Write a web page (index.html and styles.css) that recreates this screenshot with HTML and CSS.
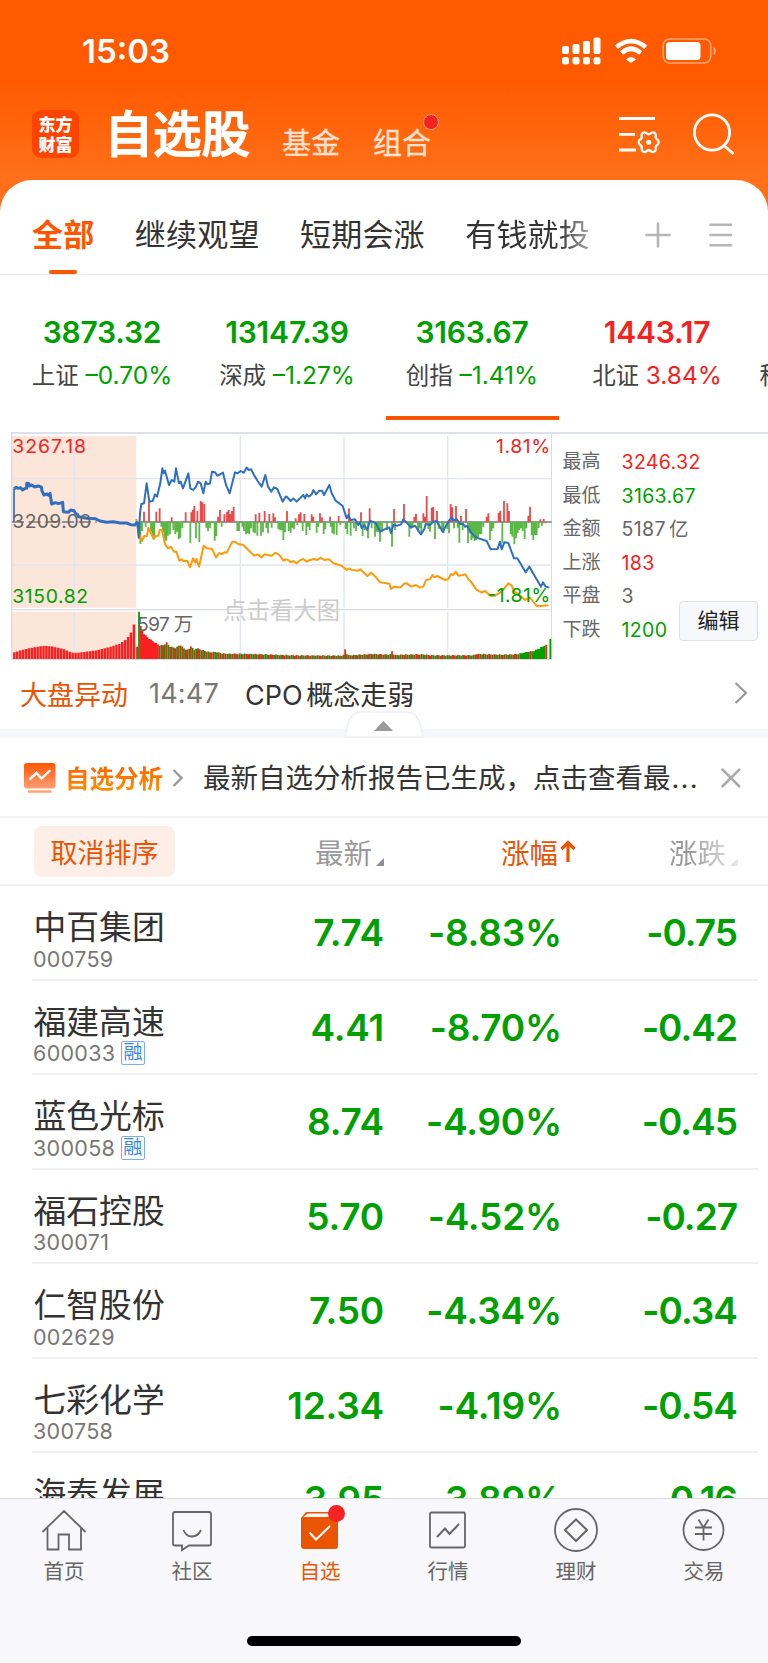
FILE: index.html
```html
<!DOCTYPE html>
<html lang="zh-CN">
<head>
  <meta charset="UTF-8" />
  <meta name="viewport" content="width=device-width, initial-scale=1.0" />
  <title>自选股</title>
  <link rel="stylesheet" href="styles.css">
</head>
<body>

<header>
  <div class="status-bar">
    <span class="time">15:03</span>
    <svg class="status-icons" width="156" height="30" viewBox="0 0 156 30">
      <g fill="#fff">
        <rect x="0" y="10" width="7" height="8" rx="2"/><rect x="10.500" y="8" width="7" height="10" rx="2"/>
        <rect x="21" y="5" width="7" height="13" rx="2"/><rect x="31.500" y="1.500" width="7" height="16.500" rx="2"/>
        <rect x="0" y="21" width="7" height="7.500" rx="2.500"/><rect x="10.500" y="21" width="7" height="7.500" rx="2.500"/>
        <rect x="21" y="21" width="7" height="7.500" rx="2.500"/><rect x="31.500" y="21" width="7" height="7.500" rx="2.500"/>
        <path d="M64 23.500 Q69 18.500 74 23.500 L69 27 Z"/>
        <rect x="104" y="6" width="34.500" height="18" rx="3.500"/>
      </g>
      <g fill="none" stroke="#fff" stroke-width="4.600">
        <path d="M54.500 11.200 Q69 -1 83.700 11.200"/>
        <path d="M59.500 17 Q69 8.500 78.700 17"/>
      </g>
      <rect x="101.200" y="3" width="47.500" height="24" rx="6.500" fill="none" stroke="#ffa673" stroke-width="1.600"/>
      <path d="M151.500 11 Q154 12 154 15 T151.500 19 Z" fill="#ffa673"/>
    </svg>
  </div>
  <div class="title-bar">
    <div class="logo"><span>东方</span><span>财富</span></div>
    <h1>自选股</h1>
    <a class="top-link">基金</a>
    <a class="top-link">组合<i class="dot"></i></a>
    <svg class="tool" width="44" height="44" viewBox="0 0 44 44" fill="none" stroke="#fff" stroke-width="2.800">
      <path d="M2 6.500H38M2 22.300H18M2 38H19"/>
      <path d="M26 20.800Q28.200 19.600 29.600 21.400Q31.700 23 33.800 21.400Q35.200 19.600 37.400 20.800Q39.200 22 38.600 24.400Q38.600 27 40.700 27.800Q42.600 30.200 40.700 32.600Q38.600 33.400 38.600 36Q39.200 38.400 37.400 39.600Q35.200 40.800 33.800 39Q31.700 37.400 29.600 39Q28.200 40.800 26 39.600Q24.200 38.400 24.800 36Q24.800 33.400 22.700 32.600Q20.800 30.200 22.700 27.800Q24.800 27 24.800 24.400Q24.200 22 26 20.800Z" stroke-width="2.300" stroke-linejoin="round"/>
      <circle cx="31.700" cy="30.200" r="2.500" fill="#fff" stroke="none"/>
    </svg>
    <svg class="search" width="44" height="44" viewBox="0 0 44 44" fill="none" stroke="#fff" stroke-width="2.800">
      <circle cx="20" cy="20.500" r="17.600"/><path d="M31.500 33L41.500 42"/>
    </svg>
  </div>
</header>

<main>
  <nav class="groups">
    <a class="active">全部</a>
    <a>继续观望</a>
    <a>短期会涨</a>
    <a class="fade">有钱就投</a>
    <svg class="plus" width="26" height="26" viewBox="0 0 26 26" stroke="#b5b5b5" stroke-width="2.600" stroke-linecap="round"><path d="M1.500 13H24.500M13 1.500V24.500"/></svg>
    <svg class="menu" width="24" height="26" viewBox="0 0 24 26" stroke="#b5b5b5" stroke-width="2.600" stroke-linecap="round"><path d="M1.500 2.800H22M1.500 13H22M1.500 23.200H22"/></svg>
  </nav>

  <section class="indexes">
    <div class="index down"><b>3873.32</b><p>上证 <em>–0.70%</em></p></div>
    <div class="index down"><b>13147.39</b><p>深成 <em>–1.27%</em></p></div>
    <div class="index down active"><b>3163.67</b><p>创指 <em>–1.41%</em></p></div>
    <div class="index up"><b>1443.17</b><p>北证 <em>3.84%</em></p></div>
    <div class="index up cut"><p>科创</p></div>
  </section>

  <section class="market">
    <svg class="chart" width="541" height="228" viewBox="33 21 1623 684">
      <path d="M36 33H409V548H36ZM36 560H409V702H36Z" fill="#fce5d9"/>
      <g stroke="#e2e5ef" stroke-width="4" fill="none">
        <path d="M223 33V548M223 560V702M721 33V548M721 560V702M1032 33V548M1032 560V702M1343 33V548M1343 560V702"/>
        <path d="M36 161H1655M36 420H1655"/>
      </g>
      <path d="M35 21V704H1655V21M35 554H1655" fill="none" stroke="#dadce5" stroke-width="4"/>
      <text class="watermark" x="670" y="582" textLength="350">点击看大图</text>
      <path d="M36 291H290" stroke="#777" stroke-width="4" stroke-dasharray="36 14"/>
      <path d="M420 291H1655" stroke="#777" stroke-width="4"/>
      <g id="momentum"></g>
      <g id="volume"></g>
      <g class="line avg">
        <polyline points="409,282 416,325 426,348 433,333 441,333 445,308 461,342 468,333 475,332 479,315 486,315 495,357 504,370 513,365 522,380 529,380 538,407 545,403 550,408 562,407 570,427 579,400 586,413 589,402 597,425 611,362 620,370 636,372 648,397 657,385 666,387 673,382 680,383 697,350 705,350 714,357 730,360 745,375 762,392 773,388 785,397 793,388 802,390 815,392 826,383 838,390 850,407 860,402"/>
        <polyline transform="translate(840)" points="20,402 32,412 40,408 50,415 58,407 70,402 80,410 90,405 103,402 112,405 121,398 132,405 148,403 160,415 185,422 200,435 207,430 215,435 235,437 241,433 252,443 262,453 273,443 288,457 300,472 328,476 333,492 342,485 352,487 362,487 372,476 380,475 394,485 408,480 420,488 430,485 438,465 450,463 457,450 463,457 471,453 495,465 505,462 513,447 520,450 527,440 535,452 550,450 556,448 565,463 573,470 588,493 605,503 615,498 632,513 645,512 665,500 685,475 695,482 703,500 712,505 735,525 750,518 770,543 783,543 805,541"/>
      </g>
      <g class="line price">
        <polyline stroke-width="5" points="42,290 42,192"/>
        <polyline class="thick" points="42,192 48,187 55,190 62,188 68,195 76,190 80,190 80,175 84,182 86,175 88,183 95,180 104,186 114,183 124,186 126,198 132,210 141,207 146,211 150,205 155,237 166,233 175,236 188,232 190,260 205,262 212,255 222,257 226,265 232,268 236,275 260,280 285,281 300,288 320,292 340,290 360,294 380,294 392,299 405,300 412,290"/>
        <polyline points="412,290 416,338 420,265 424,237 432,235 440,175 448,230 458,228 465,208 471,215 481,175 487,130 491,145 495,137 507,180 515,165 523,170 528,130 537,175 542,170 549,190 565,145 571,190 580,195 588,185 594,170 602,175 610,205 617,170 622,178 630,175 636,140 645,142 652,152 662,147 669,143 678,180 689,205 705,142 713,145 722,138 731,143 740,128 746,135 753,133 762,150 773,168 785,185 796,150 804,185 814,200 822,187 832,192 848,230 858,213"/>
        <polyline transform="translate(840)" points="18,213 32,228 40,220 50,230 70,210 75,220 80,208 86,215 95,208 100,195 108,208 118,197 126,197 132,210 148,180 155,205 167,227 188,243 200,280 205,270 212,285 225,283 235,300 240,292 245,310 253,300 262,315 270,287 288,295 300,320 313,313 328,307 333,325 340,300 352,302 363,298 370,283 380,293 393,308 405,302 423,328 433,312 437,297 450,300 460,290 470,288 488,320 505,290 515,277 522,287 530,282 540,297 550,297 555,305 562,303 567,313 578,328 590,338 620,348 632,373 653,372 660,350 665,373 673,352 685,354 702,400 712,400 737,442 748,425 783,485 789,472 796,484 808,488"/>
      </g>
      <g class="scale">
        <text x="37" y="84" textLength="221" fill="#f52222">3267.18</text>
        <text x="37" y="308" textLength="237" fill="#666">3209.00</text>
        <text x="37" y="533" textLength="227" fill="#00a000">3150.82</text>
        <text x="1488" y="84" textLength="163" fill="#f52222">1.81%</text>
        <text x="1462" y="532" textLength="189" fill="#00a000">-1.81%</text>
        <text x="411" y="618" textLength="168" fill="#666">597 万</text>
      </g>
    </svg>
    <dl class="stats">
      <div><dt>最高</dt><dd class="up">3246.32</dd></div>
      <div><dt>最低</dt><dd class="down">3163.67</dd></div>
      <div><dt>金额</dt><dd>5187 亿</dd></div>
      <div><dt>上涨</dt><dd class="up">183</dd></div>
      <div><dt>平盘</dt><dd>3</dd></div>
      <div><dt>下跌</dt><dd class="down">1200</dd></div>
    </dl>
    <button class="edit">编辑</button>
  </section>

  <section class="news">
    <span class="news-tag">大盘异动</span>
    <span class="news-time">14:47</span>
    <span class="news-text">CPO 概念走弱</span>
    <svg class="chevron" width="14" height="24" viewBox="0 0 14 24" fill="none" stroke="#999" stroke-width="2.200"><path d="M1.500 2L12 12L1.500 22"/></svg>
  </section>

  <div class="divider">
    <svg class="handle" width="78" height="28" viewBox="0 0 78 28">
      <path d="M1 26Q2 1 16 1H62Q76 1 77 26Z" fill="#fff" stroke="#eef0f3" stroke-width="1.500"/>
      <path d="M29 20L38.500 10L48 20Z" fill="#999"/>
    </svg>
  </div>

  <section class="report">
    <svg width="32" height="32" viewBox="0 0 32 32">
      <defs><linearGradient id="g" x1="0" y1="0" x2="0" y2="1"><stop offset="0" stop-color="#ff5500"/><stop offset="1" stop-color="#ff9f78"/></linearGradient></defs>
      <rect x="0" y="1" width="31.500" height="25.500" rx="3" fill="url(#g)"/>
      <path d="M5.500 17.500L12.500 11L17.500 16.500L26.500 8" fill="none" stroke="#fff" stroke-width="2.400"/>
      <path d="M4 29.500H27.500" stroke="#ffa27a" stroke-width="2.500"/>
    </svg>
    <strong>自选分析</strong>
    <svg class="report-arrow" width="12" height="20" viewBox="0 0 12 20" fill="none" stroke="#999" stroke-width="2.400"><path d="M1.500 2L9.500 10L1.500 18"/></svg>
    <span class="report-text">最新自选分析报告已生成，点击查看最<span class="more">...</span></span>
    <svg class="close" width="22" height="22" viewBox="0 0 22 22" stroke="#aaa" stroke-width="2.600"><path d="M1.800 1.800L20 20M20 1.800L1.800 20"/></svg>
  </section>

  <div class="list-head">
    <button class="reset">取消排序</button>
    <span class="col price-col">最新<svg width="8" height="8" viewBox="0 0 8 8"><path d="M8 0V8H0Z" fill="#8e8e96"/></svg></span>
    <span class="col rate-col">涨幅<svg width="16" height="22" viewBox="0 0 16 22" fill="none" stroke="#ea5504" stroke-width="3.200"><path d="M8 22V2.500M1.500 9L8 2.500L14.500 9"/></svg></span>
    <span class="col diff-col">涨跌<svg width="8" height="8" viewBox="0 0 8 8"><path d="M8 0V8H0Z" fill="#8e8e96"/></svg></span>
  </div>

  <div class="list">
    <div class="stock"><div class="name">中百集团<small>000759</small></div><b>7.74</b><b>-8.83%</b><b class="diff">-0.75</b></div>
    <div class="stock"><div class="name">福建高速<small>600033<i>融</i></small></div><b>4.41</b><b>-8.70%</b><b class="diff">-0.42</b></div>
    <div class="stock"><div class="name">蓝色光标<small>300058<i>融</i></small></div><b>8.74</b><b>-4.90%</b><b class="diff">-0.45</b></div>
    <div class="stock"><div class="name">福石控股<small>300071</small></div><b>5.70</b><b>-4.52%</b><b class="diff">-0.27</b></div>
    <div class="stock"><div class="name">仁智股份<small>002629</small></div><b>7.50</b><b>-4.34%</b><b class="diff">-0.34</b></div>
    <div class="stock"><div class="name">七彩化学<small>300758</small></div><b>12.34</b><b>-4.19%</b><b class="diff">-0.54</b></div>
    <div class="stock"><div class="name">海泰发展</div><b>3.95</b><b>-3.89%</b><b class="diff">-0.16</b></div>
  </div>
</main>

<footer>
  <div class="tabs">
    <a>
      <svg width="46" height="46" viewBox="0 0 46 46"><path d="M1.500 24L23 3L44.500 24M6.500 20V41.500H17.500V26.500H28V41.500H40V20"/></svg>
      首页
    </a>
    <a>
      <svg width="46" height="46" viewBox="0 0 46 46"><path d="M6 4H40Q42 4 42 6V35.500Q42 37.500 40 37.500H20L13 42V37.500H6Q4 37.500 4 35.500V6Q4 4 6 4Z"/><path d="M14.500 22Q17 28.500 23 28.500T32 22"/></svg>
      社区
    </a>
    <a class="active">
      <svg width="46" height="46" viewBox="0 0 46 46"><path d="M9 4H36L41 10V38Q41 41 38 41H7Q4 41 4 38V10Z" fill="#ea5504" stroke="none"/><path d="M6.500 9L10.500 5.500H34L38 9Z" fill="#f8f8fa" stroke="none"/><path d="M12.500 24.500L19 31.500L33 18" stroke="#fff" stroke-width="2"/></svg>
      自选<i class="dot"></i>
    </a>
    <a>
      <svg width="46" height="46" viewBox="0 0 46 46"><rect x="5" y="4.500" width="35" height="35" rx="1.500"/><path d="M12 29L20 20.500L24.500 26L34 16" stroke-width="2"/></svg>
      行情
    </a>
    <a>
      <svg width="46" height="46" viewBox="0 0 46 46"><circle cx="23" cy="22" r="21"/><path d="M23 11.500L34 22L23 33L12 22Z" stroke-width="2"/></svg>
      理财
    </a>
    <a>
      <svg width="46" height="46" viewBox="0 0 46 46"><circle cx="22.500" cy="22" r="20"/><path d="M17.500 11.500L22.500 19.500L27.500 11.500M14 19.500H31M14 26H31M22.500 19.500V32.500"/></svg>
      交易
    </a>
  </div>
  <div class="home-bar"></div>
</footer>

<script src="chart.js"></script>
</body>
</html>
```

FILE: styles.css
```css
* { box-sizing: border-box; }
body {
  margin: 0;
  height: 1663px;
  display: flex;
  flex-direction: column;
  overflow: hidden;
  font-family: Inter, 'Noto Sans CJK SC', sans-serif;
  font-weight: 400;
  color: #333;
  background: linear-gradient(#ff5a00 80px, #ff7019 180px, #ff7019);
}
h1, p, dl, dd { margin: 0; }
em, i { font-style: normal; }
button { font-family: inherit; padding: 0; border: 0; }
svg { display: block; flex: none; }
.up { color: #f52222; }
.down { color: #00a000; }

header { height: 180px; flex: none; color: #fff; }
.status-bar {
  height: 100px;
  padding: 2px 50px 0 82px;
  display: flex;
  align-items: center;
  justify-content: space-between;
}
.time { font-size: 33px; font-weight: 600; }
.title-bar { display: flex; height: 80px; padding: 10px 32px 0 32px; }
.logo {
  width: 47px;
  height: 48px;
  border-radius: 9px;
  background: #ff4400;
  display: flex;
  flex-direction: column;
  align-items: center;
  justify-content: center;
  font: 900 17px/20px 'Noto Sans CJK SC', sans-serif;
}
h1 { margin-left: 27px; font-size: 48.500px; line-height: 49px; font-weight: 500; width: 147px; text-indent: -1.500px; white-space: nowrap; -webkit-text-stroke: 1.400px #fff; }
.top-link { position: relative; font-size: 29px; line-height: 68px; height: 60px; margin-left: 29px; width: 62px; color: #ffe3d2; white-space: nowrap; -webkit-text-stroke: .3px #ffe3d2; }
.top-link .dot { position: absolute; left: 50px; top: 4px; border: 1px solid #ffa080; }
.dot { width: 16px; height: 16px; border-radius: 50%; background: #f52222; }
.tool { margin-left: auto; margin-top: 2px; }
.search { margin: 2px 0 0 31px; }

main {
  background: #fff;
  border-radius: 32px 32px 0 0;
  height: 1318px;
  flex: none;
  overflow: hidden;
}
.groups {
  height: 95px;
  padding: 0 35.500px 0 32px;
  display: flex;
  align-items: center;
  border-bottom: 1px solid #eaebed;
  font-size: 31px;
}
.groups a { position: relative; margin-right: 40.400px; padding-top: 15px; height: 94px; line-height: 80px; letter-spacing: .2px; white-space: nowrap; }
.groups .active { color: #ff5500; font-weight: 600; }
.groups .active::after {
  content: '';
  position: absolute;
  left: 17px;
  bottom: 0;
  width: 28px;
  height: 4px;
  border-radius: 2px;
  background: #ff5500;
}
.groups .fade { margin-right: 0; background: linear-gradient(90deg, #333 75%, #aaa); -webkit-background-clip: text; color: transparent; }
.plus { margin: 15px 0 0 auto; }
.menu { margin: 15px 0 0 38px; }

.indexes { display: flex; height: 157px; padding-left: 9.500px; overflow: hidden; }
.index {
  position: relative;
  flex: none;
  width: 185px;
  padding-top: 37.500px;
  text-align: center;
  white-space: nowrap;
}
.index b { display: block; font-size: 30px; line-height: 38px; font-weight: 600; letter-spacing: -0.2px; }
.index p { font-size: 23.500px; line-height: 49px; color: #444; }
.index em { font-size: 24.500px; }
.down em { color: #00a000; }
.up em { color: #f52222; }
.index.active::after {
  content: '';
  position: absolute;
  left: 6px;
  right: 6px;
  top: 141px;
  height: 4px;
  background: #ff5500;
}
.cut { text-align: left; padding: 76px 0 0 10px; }

.market { position: relative; display: flex; height: 230px; margin-left: 11px; border-top: 2px solid #dfe1ea; }
.chart { margin-top: -2px; }
.chart text { font-family: Inter, 'Noto Sans CJK SC', sans-serif; }
.scale text { font-size: 58px; }
.chart .watermark { font-size: 70px; fill: #ccc; }
.line { fill: none; stroke-width: 6; stroke-linejoin: round; }
.price { stroke: #2f6fc0; }
.price .thick { stroke-width: 9; }
.avg { stroke: #ff9a0a; }
.stats { padding: 11px 0 0 10.500px; font-size: 19px; color: #666; }
.stats div { display: flex; height: 33.500px; line-height: 34px; }
.stats dt { width: 59px; }
.stats dd { font-size: 19.500px; letter-spacing: .35px; word-spacing: -2.500px; }
.edit {
  position: absolute;
  right: 10px;
  top: 166.500px;
  width: 79px;
  height: 40px;
  border: 1px solid #dcdfe5;
  border-radius: 4px;
  background: #f7f8fa;
  color: #222;
  font-size: 21px;
  line-height: 36px;
}

.news { display: flex; align-items: center; height: 67px; padding: 0 20px 5px; font-size: 27px; white-space: nowrap; }
.news-tag { color: #ea5504; width: 129px; }
.news-time { color: #777; width: 96px; letter-spacing: .2px; }
.news-text { word-spacing: -4px; }
.chevron { margin-left: auto; }
.divider { position: relative; height: 9px; background: #f5f7fa; }
.handle { position: absolute; left: 345px; top: -18px; }

.report { display: flex; align-items: center; height: 80px; padding: 1px 26px 0 24px; border-bottom: 2px solid #f2f3f5; }
.report strong {
  margin-left: 9px;
  font-size: 24.500px;
  font-weight: 700;
  white-space: nowrap;
  background: linear-gradient(#ff5a00, #ff9500);
  -webkit-background-clip: text;
  color: transparent;
}
.report-arrow { margin-left: 9px; }
.report-text { margin-left: 19px; font-size: 27.500px; line-height: 36px; white-space: nowrap; }
.more { margin-left: 1px; letter-spacing: 1.200px; }
.close { margin-left: auto; }

.list-head { display: grid; grid-template-columns: 141px 209px 192px 1fr; padding: 0 30px 0 34px; height: 68px; align-items: center; border-bottom: 2px solid #f2f3f5; font-size: 28.500px; }
.reset { height: 51px; border-radius: 8px; background: #fdeee8; color: #ea5504; font-size: 27px; }
.col { display: flex; align-items: center; justify-content: flex-end; color: #999; height: 40px; white-space: nowrap; }
.col svg { margin: 22px 0 0 4px; }
.rate-col { color: #ea5504; }
.rate-col svg { margin: 0 0 0 2px; }
.diff-col { -webkit-mask-image: linear-gradient(90deg, #000 70%, rgba(0,0,0,.2) 100%); }

.stock {
  display: grid;
  grid-template-columns: 175px 177px 178px 176px;
  height: 94.500px;
  margin: 0 10px 0 32px;
  border-bottom: 2px solid #f0f0f1;
}
.name { padding: 20px 0 0 1.500px; font-size: 32.800px; line-height: 42px; white-space: nowrap; }
.name small { display: flex; align-items: center; height: 21px; margin-left: -0.5px; font-size: 21.500px; color: #777; letter-spacing: .3px; }
.name small i {
  width: 24px;
  height: 24px;
  margin-left: 5.500px;
  border: 1.500px solid #79aeea;
  border-radius: 2px;
  color: #3888e0;
  font-size: 19px;
  line-height: 21px;
  text-align: center;
  letter-spacing: 0;
}
.stock b { text-align: right; font-size: 37px; line-height: 94px; height: 90px; font-weight: 600; color: #00a000; letter-spacing: -0.2px; }
.stock .diff { letter-spacing: -1px; padding-right: 1px; }

footer { position: relative; flex: 1; background: #f8f8fa; border-top: 1px solid #dcdcdf; }
.tabs { display: flex; }
.tabs a {
  position: relative;
  flex: 1;
  display: flex;
  flex-direction: column;
  align-items: center;
  padding-top: 9px;
  font-size: 20.500px;
  line-height: 36px;
  color: #666;
}
.tabs svg { fill: none; stroke: #666; stroke-width: 1.800; }
.tabs .active { color: #ea5504; }
.tabs .dot { position: absolute; left: 72px; top: 6px; width: 17px; height: 17px; }
.home-bar { position: absolute; left: 247px; bottom: 17px; width: 274px; height: 10px; border-radius: 5px; background: #000; }
```

FILE: chart.js
```js
// [x, y] ends of the bars, measured from the zero line at y = 291
const ZERO = 291;
const rises = [
  432,260, 447,230, 469,260, 479,250, 515,277, 557,262, 574,262, 578,255, 583,243, 592,258, 602,228, 607,232, 613,237,
  654,275, 660,255, 673,268, 681,260, 686,255, 691,267, 696,258, 701,245, 767,268, 778,263, 794,258, 808,267, 820,265,
  825,277, 861,258, 887,280, 897,268, 902,262, 913,267, 935,268, 940,275, 960,265, 966,277, 990,275, 1016,273,
  1047,250, 1083,262, 1109,250, 1182,252, 1212,237, 1243,275, 1248,266, 1270,265, 1275,275, 1280,213, 1295,248, 1300,246,
  1311,257, 1352,237, 1357,247, 1368,243, 1383,273, 1398,252, 1460,275, 1465,265, 1496,263, 1501,257, 1512,228, 1522,235,
  1527,258, 1585,272, 1590,245, 1621,283, 1631,282
];
const falls = [
  421,357, 426,318, 437,305, 453,320, 458,332, 463,342, 484,305, 489,322, 494,347, 499,347, 504,332, 510,328, 520,315,
  526,327, 531,320, 536,343, 541,338, 547,310, 571,355, 588,340, 598,352, 619,308, 624,318, 630,310, 644,347, 649,333,
  665,305, 712,318, 717,318, 727,305, 732,318, 738,328, 743,325, 748,328, 753,310, 760,322, 765,325, 772,332, 783,332,
  789,322, 799,310, 804,325, 815,308, 835,312, 840,316, 845,316, 850,345, 855,322, 866,318,
  872,323, 877,308, 882,313, 892,300, 908,318, 919,330, 924,305, 929,315, 950,323, 955,305, 971,327, 976,313,
  992,305, 997,325, 1002,328, 1010,330, 1021,300, 1037,312, 1042,327, 1052,332, 1062,310, 1068,318, 1078,300, 1088,333,
  1094,315, 1104,340, 1115,310, 1125,335, 1130,320, 1135,320, 1140,350, 1146,322, 1161,315, 1176,365, 1185,315, 1228,335,
  1233,310, 1238,305, 1254,320, 1259,310, 1264,325, 1285,312, 1290,320, 1305,342, 1316,312, 1326,315, 1331,325, 1342,312,
  1347,325, 1362,310, 1373,308, 1378,353, 1388,315, 1404,355, 1409,325, 1414,345, 1419,340, 1424,348, 1429,345, 1434,338,
  1439,328, 1444,328, 1450,305, 1470,345, 1475,318, 1480,310, 1507,355, 1532,328, 1537,335, 1543,358, 1548,340, 1553,325,
  1558,315, 1563,310, 1568,318, 1574,342, 1579,310, 1595,330, 1600,345, 1605,330, 1610,330, 1616,310, 1626,302, 1637,295
];

function addPath(id, d, color, width) {
  const p = document.createElementNS('http://www.w3.org/2000/svg', 'path');
  p.setAttribute('d', d);
  p.setAttribute('stroke', color);
  p.setAttribute('stroke-width', width);
  document.getElementById(id).appendChild(p);
}

function bars(list, color) {
  let d = '';
  for (let i = 0; i < list.length; i += 2) d += `M${list[i]} ${ZERO}V${list[i + 1]}`;
  addPath('momentum', d, color, 5.4);
}
bars(rises, '#e94b4b');
bars(falls, '#5ab845');

// volume: outline of the bar tops, filled in at a fixed step
function topAt(outline, x) {
  for (let i = 0; i < outline.length - 1; i++) {
    const [x1, y1] = outline[i];
    const [x2, y2] = outline[i + 1];
    if (x <= x2) return y1 + (y2 - y1) * (x - x1) / (x2 - x1);
  }
  return outline[outline.length - 1][1];
}

const before = [[40,683],[70,674],[100,667],[130,663],[155,664],[190,672],[215,683],[235,683],[290,676],[330,666],[360,656],[380,642],[390,628],[397,616],[404,590]];
const after = [[417,560],[422,602],[432,625],[445,638],[478,660],[490,660],[500,652],[510,664],[528,668],[540,658],[555,672],[565,674],[573,662],[582,674],[590,668],[605,674],[630,681],[650,680],[670,685],[760,686],[870,690],[1030,691],[1036,670],[1042,690],[1120,686],[1170,688],[1176,678],[1182,689],[1260,687],[1300,690],[1420,690],[1430,686],[1500,688],[1550,687],[1590,678],[1600,678],[1620,668],[1637,659]];

let pre = '';
for (let x = 43; x < 408; x += 8.75) pre += `M${x} 702V${topAt(before, x)}`;
addPath('volume', pre + 'M412 702V665', '#fa2020', 7.4);

let red = '';
let green = 'M417 702V560M1651 702V642';
for (let x = 422, i = 0; x < 1640; x += 5.2, i++) {
  const bar = `M${x} 702V${topAt(after, x) + (i * 7 % 3)}`;
  const falling = x > 474 && (x > 1560 ? i % 9 !== 0 : (i * i + 3 * i) % 7 < 4);
  if (falling) green += bar; else red += bar;
}
addPath('volume', red, '#fa2020', 5.4);
addPath('volume', green, '#00a000', 5.4);
```
